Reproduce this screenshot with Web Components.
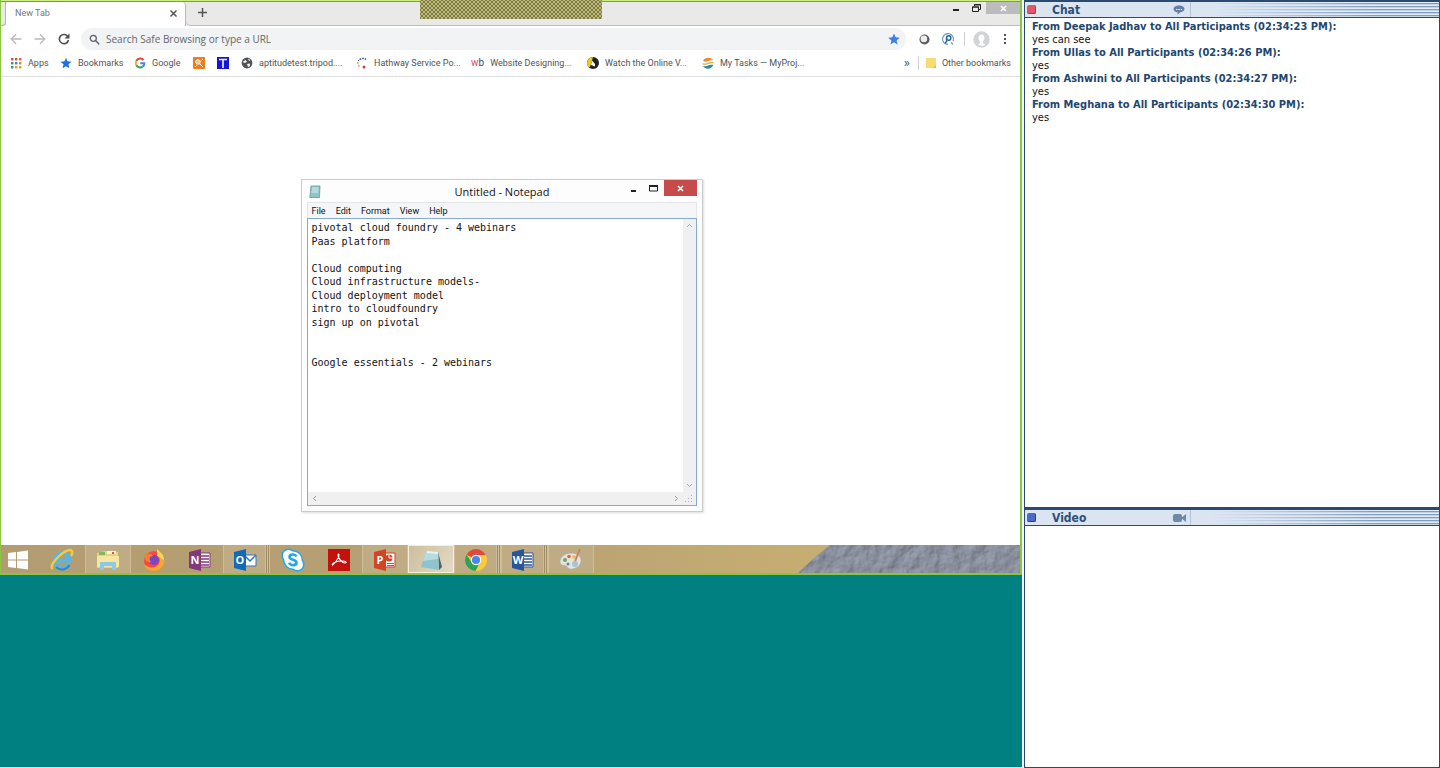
<!DOCTYPE html>
<html lang="en">
<head>
<meta charset="utf-8">
<title>Webinar</title>
<style>
html,body{margin:0;height:100%}
body{font-family:"Open Sans","Noto Sans",sans-serif}
</style>
</head>
<body>
<webinar-room></webinar-room>
<script>
const define = (name, html, setup) => customElements.define(name, class extends HTMLElement {
  connectedCallback() {
    if (this.shadowRoot) return;
    const root = this.attachShadow({ mode: 'open' });
    const t = document.createElement('template');
    t.innerHTML = html;
    root.append(t.content.cloneNode(true));
    if (setup) setup(this, root);
  }
});

define('webinar-room', `
<style>
:host{display:grid;grid-template-columns:minmax(0,1fr) 416px;column-gap:2px;min-height:100vh;background:#f4f7fb}
.stage{display:flex;flex-direction:column;background:#008080;border-bottom:1px solid #fff}
.side{display:flex;flex-direction:column}
.grow{flex:1}
.video{flex:0 0 261px}
</style>
<main class="stage"><shared-screen></shared-screen></main>
<aside class="side">
<side-panel class="grow" heading="Chat" tone="red"><svg slot="icon" width="12" height="10" viewBox="0 0 12 10"><path d="M6 .5C3 .5.5 1.900.5 4S3 7.300 4.500 7.300L4.500 9.500 7.500 7.200C10 6.900 11.500 5.600 11.500 4 11.500 1.900 9 .5 6 .5Z" fill="#6580a5"/><path d="M3 4h1.500v1H3zM5.300 4h1.500v1H5.300zM7.600 4h1.500v1H7.600z" fill="#dfe8f4"/></svg>
<chat-log></chat-log></side-panel>
<side-panel class="video" heading="Video" tone="blue"><svg slot="icon" width="14" height="10" viewBox="0 0 14 10"><rect y="1" width="9" height="8" rx="2" fill="#6f8aa8"/><path d="M8 5l5-4v8z" fill="#6f8aa8"/></svg></side-panel>
</aside>`);

define('side-panel', `
<style>
:host{display:flex;flex-direction:column;box-sizing:border-box;background:#fff;border:1px solid #2b4a70;border-top-width:2px;border-bottom-width:0}
:host(.video){border-top-width:3px;border-bottom-width:1px}
header{display:flex;align-items:center;height:15px;border-bottom:1px solid #2b4a70;background:#dbe5f2}
.dot{box-sizing:border-box;width:9px;height:9px;margin-left:2px;border-radius:2px;background:#e3566b;border:solid #a23c4e;border-width:0 1px 1px 0}
:host([tone=blue]) .dot{background:#4d68cc;border-color:#2c3f88}
h2{margin:0 0 0 16px;width:121px;font:bold 12px/16px "DejaVu Sans Condensed","DejaVu Sans",sans-serif;color:#2f4f74}
.icon{display:flex;width:17px}
.lines{flex:1;align-self:stretch;border-left:1px solid #b3c5da;background:linear-gradient(90deg,#dbe5f2 8%,#dbe5f200 75%),repeating-linear-gradient(#e4ecf5 0 1px,#7f9dbf 1px 2px,#c3d2e4 2px 3px)}
</style>
<header><span class="dot"></span><h2></h2><span class="icon"><slot name="icon"></slot></span><span class="lines"></span></header>
<slot></slot>`, (el, r) => { r.querySelector('h2').textContent = el.getAttribute('heading'); });

define('chat-log', `
<style>
:host{display:block;padding:2px 7px}
p,h3{margin:0;font:11px/13px "DejaVu Sans Condensed","DejaVu Sans",sans-serif;color:#111}
h3{font-weight:bold;color:#23466e}
</style>
<h3>From Deepak Jadhav to All Participants (02:34:23 PM):</h3><p>yes can see</p>
<h3>From Ullas to All Participants (02:34:26 PM):</h3><p>yes</p>
<h3>From Ashwini to All Participants (02:34:27 PM):</h3><p>yes</p>
<h3>From Meghana to All Participants (02:34:30 PM):</h3><p>yes</p>`);

define('shared-screen', `
<style>
:host{display:flex;flex-direction:column;position:relative;box-sizing:border-box;aspect-ratio:1022/575;background:#fff;border:2px solid #8cc540;border-left-width:1px;border-top:0;overflow:hidden}
.hatch{position:absolute;left:41.1%;top:0;z-index:2}
.top{height:2px;background:linear-gradient(#c9f07e 50%,#6fa83c 50%)}
.desk{flex:1;display:flex;justify-content:center;align-items:flex-start;padding-top:102px}
</style>
<span class="top"></span>
<browser-chrome></browser-chrome>
<svg class="hatch" width="182" height="19" aria-hidden="true"><defs><pattern id="net" width="4" height="4" patternUnits="userSpaceOnUse"><rect width="4" height="4" fill="#7b7660"/><path d="M-1-1L5 5M5-1L-1 5" stroke="#d3d15c" stroke-width=".8"/></pattern></defs><rect width="182" height="19" fill="url(#net)"/></svg>
<div class="desk"><note-pad></note-pad></div>
<task-bar></task-bar>`);

define('browser-chrome', `
<style>
:host{display:block;color:#505357;border-bottom:1px solid #dfe1e3;font:9px/14px Roboto,"Open Sans",sans-serif}
button{all:unset;display:flex;align-items:center;justify-content:center}
svg{display:block;flex:none}
.tabs{display:flex;height:24px;background:#e9e9e8;box-sizing:border-box}
.edge{width:5px;border:solid #b5b5b5;border-width:0 1px 1px 0;border-radius:0 0 4px 0;box-sizing:border-box}
.tab{display:flex;align-items:center;width:180px;box-sizing:border-box;padding:0 7px 2px 9px;background:#fff;border-right:1px solid #b5b5b5;border-radius:4px 4px 0 0}
.tab span{flex:1;color:#74777a}
.rest{flex:1;display:flex;border-bottom:1px solid #bdbdbd;align-items:flex-start;border-radius:0 0 0 5px}
.plus{width:32px;height:21px}
.win{margin-left:auto;display:flex}
.win button{height:12px;width:20px}
.win .x{width:34px;background:#bcbcbc}
.bar{display:flex;align-items:center;height:26px;padding:0 3px}
.bar>button{width:24px;height:24px}
.omni{flex:1;display:flex;align-items:center;height:22px;margin:0 6px 0 5px;padding:0 6px 0 8px;border-radius:11px;background:#f1f3f4;gap:6px}
.omni input{all:unset;flex:1;font:10px/22px "Open Sans","Noto Sans",sans-serif;color:#63676b}
.omni input::placeholder{color:#63676b;opacity:1}
.sep{width:1px;height:14px;background:#cfd1d3;margin:0 4px}
.marks{display:flex;align-items:center;height:24px;padding:0 9px 2px;box-sizing:border-box}
.marks a{display:flex;align-items:center;color:inherit;text-decoration:none;white-space:nowrap}
.marks .sep{margin:0 7px 0 8px}
.marks svg,.marks .wb{margin-right:6px}
.marks .more{margin-left:auto;font-size:13px}
.wb{color:#3c4770;font:10px/12px Roboto,"Open Sans",sans-serif}.wb b{color:#d94a68;font-weight:normal}
</style>
<div class="tabs"><span class="edge"></span>
<div class="tab"><span>New Tab</span><button aria-label="Close tab"><svg width="9" height="9" viewBox="0 0 9 9"><path d="M1.500 1.500l6 6m0-6l-6 6" stroke="#555" stroke-width="1.500"/></svg></button></div>
<div class="rest"><button class="plus" aria-label="New tab"><svg width="11" height="11" viewBox="0 0 11 11"><path d="M5.500 1v9M1 5.500h9" stroke="#555" stroke-width="1.500"/></svg></button>
<div class="win"><button aria-label="Minimize"><svg width="8" height="8"><path d="M1 5h6v2H1z" fill="#222"/></svg></button><button aria-label="Restore"><svg width="9" height="9" viewBox="0 0 9 9"><path d="M2.500 2V.5h6v5H7M.5 3h6v4.500h-6z" fill="none" stroke="#222"/><path d="M0 3h7M2 1h7" stroke="#222"/></svg></button><button class="x" aria-label="Close"><svg width="7" height="7"><path d="M1 1l5 5m0-5l-5 5" stroke="#fff" stroke-width="1.500"/></svg></button></div></div></div>
<div class="bar">
<button aria-label="Back"><svg width="12" height="12" viewBox="0 0 12 12"><path d="M11.500 6H1.500M6 1.200L1.200 6 6 10.800" fill="none" stroke="#b9bbbd" stroke-width="1.300"/></svg></button>
<button aria-label="Forward"><svg width="12" height="12" viewBox="0 0 12 12"><path d="M.5 6h10M6 1.200L10.800 6 6 10.800" fill="none" stroke="#b9bbbd" stroke-width="1.300"/></svg></button>
<button aria-label="Reload"><svg width="12" height="12" viewBox="0 0 12 12"><path d="M10 3.800A4.600 4.600 0 1 0 10.500 7" fill="none" stroke="#4d5054" stroke-width="1.600"/><path d="M11.500.5v5h-5z" fill="#4d5054"/></svg></button>
<label class="omni"><svg width="11" height="11" viewBox="0 0 11 11"><circle cx="4.300" cy="4.300" r="3" fill="none" stroke="#5f6368" stroke-width="1.300"/><path d="M6.500 6.500l3.700 3.700" stroke="#5f6368" stroke-width="1.500"/></svg><input aria-label="Address" placeholder="Search Safe Browsing or type a URL"><svg width="12" height="12" viewBox="0 0 12 12"><path d="M6 .5l1.600 3.800 4.200.4-3.200 2.700 1 4.100L6 9.300l-3.600 2.200 1-4.100L.2 4.700l4.200-.4z" fill="#3f7de8"/></svg></label>
<button aria-label="Extension"><svg width="11" height="11" viewBox="0 0 11 11"><circle cx="5.500" cy="5.500" r="5" fill="#5c5c5c"/><circle cx="4.900" cy="4.900" r="3.300" fill="#eee"/></svg></button>
<button aria-label="Safe search"><svg width="12" height="12" viewBox="0 0 12 12"><path d="M11 8A5.400 5.400 0 1 0 6 11.400M9 9.500l2 2" fill="none" stroke="#5f97c4" stroke-width="1.100"/><circle cx="6.700" cy="5" r="2.200" fill="none" stroke="#27639a" stroke-width="1.400"/><path d="M4.500 5v3.500L3 10.500" fill="none" stroke="#27639a" stroke-width="1.300"/></svg></button>
<span class="sep"></span>
<button aria-label="Profile"><svg width="17" height="17" viewBox="0 0 17 17"><circle cx="8.500" cy="8.500" r="8.200" fill="#d2d3d4"/><path d="M8.500 3.500c-2 0-3 1.500-3 3.500 0 1.600.6 2.600 1.500 3.300V12l-2.200 1.200c2 2 5.400 2 7.400 0L10 12v-1.700c.9-.7 1.500-1.700 1.500-3.300 0-2-1-3.500-3-3.500z" fill="#fff"/></svg></button>
<button aria-label="Menu"><svg width="4" height="12"><path d="M1 1h2v2H1zM1 5h2v2H1zM1 9h2v2H1z" fill="#4d5054"/></svg></button>
</div>
<nav class="marks"></nav>`, (el, r) => {
  const nav = r.querySelector('nav');
  const s = (w, inner) => `<svg width="${w}" height="12" viewBox="0 0 ${w} 12">${inner}</svg>`;
  const dots = [0,1,2].flatMap(y => [0,1,2].map(x => `<rect x="${x*4+1}" y="${y*4+1}" width="2.400" height="2.400" fill="${[['#d94b3d','#d94b3d','#d9603d'],['#3a9b50','#3f7de8','#e08a30'],['#3a9b50','#e0a030','#e0a030']][y][x]}"/>`)).join('');
  const items = [
    [50, s(12, dots), 'Apps'],
    [74, s(12, '<path d="M6 .8l1.500 3.500 4 .4-3 2.600.9 4L6 9.200l-3.400 2.100.9-4-3-2.600 4-.4z" fill="#1f6fe0"/>'), 'Bookmarks'],
    [59, s(12, '<g fill="none" stroke-width="2"><path d="M9.500 3A4.300 4.300 0 0 0 2.300 4" stroke="#e04436"/><path d="M2.300 4a4.300 4.300 0 0 0 0 4" stroke="#f2b90c"/><path d="M2.300 8a4.300 4.300 0 0 0 6.400 1.600" stroke="#35a553"/><path d="M8.700 9.600A4 4 0 0 0 10.300 6.200H6.300" stroke="#4285f4"/></g>'), 'Google'],
    [24, s(12, '<rect width="12" height="12" rx="1" fill="#ed7c1d"/><circle cx="5" cy="5" r="2.300" fill="#f7bb80" stroke="#fff"/><path d="M6.500 6.500l3.500 3.500M2 10l2-2M8.500 3l1.500-1" stroke="#fff"/>'), ''],
    [24, s(12, '<rect width="12" height="12" fill="#1414dc"/><path d="M2 2.500h8M6 2.500v8.500" stroke="#fff" stroke-width="1.500"/>'), ''],
    [115, s(12, '<circle cx="6" cy="6" r="5.400" fill="#505357"/><path d="M1.500 5l3-2 1.500 1.500L4 6zM6 7l3-.5L9 9 7 10zM7 1.500l2.500 1.500L8 4z" fill="#f5f5f5"/>'), 'aptitudetest.tripod....'],
    [115, s(12, '<path d="M10 2.500A5 5 0 0 0 2.500 4" fill="none" stroke="#35589b" stroke-width="1.500" stroke-dasharray="1.500 1"/><path d="M2 5a4 4 0 0 0 2.500 5" fill="none" stroke="#eda43c" stroke-width="1.500" stroke-dasharray="2 1"/><circle cx="8" cy="10" r="1.500" fill="#cb4533"/>'), 'Hathway Service Po...'],
    [116, '<span class="wb"><b>w</b>b</span>', 'Website Designing...'],
    [115, s(12, '<circle cx="6" cy="6" r="6" fill="#222"/><path d="M6 0A6 6 0 0 0 0 6c0 2 1 3.500 2.500 4.700L4 7z" fill="#ebc918"/><path d="M5 3.500l3 3.500v2.500L4 8z" fill="#fff"/>'), 'Watch the Online V...'],
    [0, s(12, '<path d="M1 4C3 0 9-.5 11.500 3.500 8 1.500 6 6.500 1 4z" fill="#ef8732"/><path d="M.5 6c4 2 7-2.500 11-1v1.500C8 5.500 5 9 .8 7.500z" fill="#e9b23a"/><path d="M1 9c4 1.500 6-2.500 10.500-1C9 12.500 3.500 12.800 1 9z" fill="#188fa8"/>'), 'My Tasks — MyProj...']
  ];
  nav.innerHTML = items.map(([w, i, t]) => `<a href="#" aria-label="${t || 'Bookmark'}"${w ? ` style="width:${w}px"` : ''}>${i}${t}</a>`).join('') +
   `<a href="#" class="more">»</a><span class="sep"></span><a href="#"><svg width="10" height="12" viewBox="0 0 10 12"><path d="M0 1h10v10H8L0 11z" fill="#f6dc72"/><path d="M7 11l3-3v3z" fill="#ddb940"/></svg>Other bookmarks</a>`;
});

define('note-pad', `
<style>
:host{display:flex;flex-direction:column;box-sizing:border-box;width:402px;height:333px;margin-right:18px;border:1px solid #c9cbce;background:#fdfdfd;padding:0 5px 5px;box-shadow:1px 1px 2px #ddd;font:9px/14px Roboto,"Open Sans",sans-serif;color:#111}
button{all:unset;display:flex;align-items:center;justify-content:center}
svg{display:block}
.title{display:flex;height:22px}
.title>svg{margin:5px 0 0 2px}
h1{flex:1;margin:0;padding-left:60px;text-align:center;font:11px/23px "Open Sans","Noto Sans",sans-serif}
.title button{width:20px;height:16px}
.title .x{width:33px;background:#c84b4c}
.menu{display:flex;gap:10px;height:15px;align-items:center;padding:0 4px;background:#f4f6f7;border:1px solid #e3e5e7;border-width:1px 1px 0}
.doc{flex:1;display:grid;grid-template:1fr 13px/1fr 13px;border:1px solid #85aad8;background:#f0f0f0}
textarea{all:unset;display:block;box-sizing:border-box;background:#fff;padding:2px 4px;font:10px/1.35 "DejaVu Sans Mono",monospace;white-space:pre;color:#111}
.v{display:flex;flex-direction:column;justify-content:space-between;align-items:center;padding:4px 0}
.h{display:flex;justify-content:space-between;align-items:center;padding:0 4px}
.grip{place-self:center}
</style>
<div class="title"><svg width="12" height="13" viewBox="0 0 12 13"><path d="M2 1h9l-.5 11.500H.8z" fill="#8fc6c8" stroke="#66898e" stroke-width=".7"/><path d="M3 3h6.500M3 5h6.500M2.500 7H9" stroke="#d8f0ee"/></svg><h1>Untitled - Notepad</h1>
<button aria-label="Minimize"><svg width="7" height="7"><path d="M1 5h5v2H1z" fill="#222"/></svg></button><button aria-label="Maximize"><svg width="9" height="7"><path d="M.5 1h8v5h-8z" fill="none" stroke="#222"/><path d="M0 1h9" stroke="#222" stroke-width="2"/></svg></button><button class="x" aria-label="Close"><svg width="7" height="7"><path d="M1 1l5 5m0-5l-5 5" stroke="#fff" stroke-width="1.500"/></svg></button></div>
<div class="menu"><button>File</button><button>Edit</button><button>Format</button><button>View</button><button>Help</button></div>
<div class="doc"><textarea aria-label="Document" spellcheck="false">pivotal cloud foundry - 4 webinars
Paas platform

Cloud computing
Cloud infrastructure models-
Cloud deployment model
intro to cloudfoundry
sign up on pivotal


Google essentials - 2 webinars</textarea>
<div class="v"><svg width="7" height="5"><path d="M1 4l2.500-2.500L6 4" fill="none" stroke="#aaa"/></svg><svg width="7" height="5"><path d="M1 1l2.500 2.500L6 1" fill="none" stroke="#aaa"/></svg></div>
<div class="h"><svg width="5" height="7"><path d="M4 1L1.500 3.500 4 6" fill="none" stroke="#999"/></svg><svg width="5" height="7"><path d="M1 1l2.500 2.500L1 6" fill="none" stroke="#999"/></svg></div>
<svg class="grip" width="8" height="8"><path d="M6 0h1v1H6zM3 3h1v1H3zM6 3h1v1H6zM0 6h1v1H0zM3 6h1v1H3zM6 6h1v1H6z" fill="#aab4be"/></svg></div>`);

define('task-bar', `
<style>
:host{display:flex;height:28px;overflow:hidden;background:linear-gradient(90deg,#b49c72,#b8a174 50%,#c6ae72 80%)}
.apps{display:flex;flex:1}
button{all:unset;box-sizing:border-box;display:flex;align-items:center;justify-content:center;width:46px;padding-top:2px}
.start{width:38px;padding-right:4px}
.open{background:#c0ac84;border:1px solid #cdbd9b;border-width:0 1px}
.active{background:linear-gradient(120deg,#cdbf9d,#e3dac6);border:1px solid #f4efe3}
.multi{box-shadow:1px 0 #a08b64,2px 0 #d0c19e,3px 0 #a08b64,4px 0 #d0c19e;width:43px;margin-right:4px}
svg{display:block;flex:none}
.g{font:bold 11px "Open Sans","Noto Sans",sans-serif;fill:#fff}
</style>
<div class="apps"></div>
<svg width="222" height="28" viewBox="0 0 222 28" aria-hidden="true"><defs><filter id="rock" x="0" y="0" width="100%" height="100%" color-interpolation-filters="sRGB"><feTurbulence type="fractalNoise" baseFrequency=".08 .07" numOctaves="4" seed="8"/><feDiffuseLighting surfaceScale="1.500" lighting-color="#9da3b3"><feDistantLight azimuth="225" elevation="62"/></feDiffuseLighting><feComposite in2="SourceGraphic" operator="in"/></filter></defs><path d="M0 28L16 13 32 0H222V28Z" fill="#878b99" filter="url(#rock)"/></svg>`, (el, r) => {
  const s = (inner) => `<svg width="26" height="24" viewBox="0 0 26 24">${inner}</svg>`;
  const office = (c, l, extra) => `<path d="M11 5h12v14H11z" fill="#fff" stroke="${c}"/>${extra}<path d="M2 4l12-3v22L2 20z" fill="${c}"/><text class="g" x="8" y="16" text-anchor="middle">${l}</text>`;
  const lines = c => `<path d="M14 8h8M14 11h8M14 14h8M14 17h8" stroke="${c}" stroke-width="1.500"/>`;
  const apps = [
    ['Start','start', s('<path d="M3 5l8-1v7.500H3zM12 3.900L23 2.500v9H12zM3 12.500h8V20l-8-1zM12 12.500h11v9L12 20z" fill="#fff"/>')],
    ['Internet Explorer','', s('<path d="M20 16.500A7.500 7.500 0 1 1 20.800 12.500H7" fill="none" stroke="#55b7e5" stroke-width="4"/><path d="M20.500 17A8.500 8.500 0 0 1 7 19" fill="none" stroke="#2c8bc6" stroke-width="2"/><path d="M3.500 21C-1 16 18-1 22.500 2.500c1.500 1 .5 4-.5 5.500" fill="none" stroke="#f4cc3b" stroke-width="2.400"/>')],
    ['File Explorer','open', s('<path d="M2 5l8-2 13 1v16H2z" fill="#e9d27d"/><path d="M4 4h6v3H4z" fill="#82b86c"/><path d="M12 3h9v3h-9z" fill="#f8f4df"/><path d="M17 4h2v2h-2z" fill="#cf5a48"/><path d="M2 8h22v11H2z" fill="#f6e6a0"/><path d="M5 22v-8h16v8h-4v-4H9v4z" fill="#8bc9e4"/>')],
    ['Firefox','', s('<circle cx="13" cy="13" r="10" fill="#f34a45"/><path d="M17 2c1 4 8 6 6 13-1 5-6 8-10 8-5 0-9-3-10-7 4 4 10 5 14 1 3-3 2-8-1-10z" fill="#f9a72c"/><path d="M16 1l6 6 1 5-7-4z" fill="#fcd74b"/><circle cx="13" cy="12" r="5" fill="#7a46c8"/><path d="M4 6c4-1 7 0 8 2l-3 1c-1 2 0 4 1 5-5 1-7-4-6-8z" fill="#fb7c32"/>')],
    ['OneNote','', s(office('#80397b','N',lines('#80397b')))],
    ['Outlook','open multi', s('<path d="M12 7h12v11H12z" fill="#fff" stroke="#2c79c4"/><path d="M13 8l5 5 6-6" fill="none" stroke="#2c79c4" stroke-width="1.500"/><path d="M2 4l12-3v22L2 20z" fill="#1269b8"/><text class="g" x="8" y="16" text-anchor="middle">O</text>')],
    ['Skype','', s('<circle cx="8.500" cy="7.500" r="7" fill="#1fa8e5"/><circle cx="17.500" cy="16.500" r="7" fill="#1fa8e5"/><circle cx="13" cy="12" r="10" fill="#1fa8e5"/><circle cx="8.500" cy="7.500" r="5.500" fill="#fff"/><circle cx="17.500" cy="16.500" r="5.500" fill="#fff"/><circle cx="13" cy="12" r="8.600" fill="#fff"/><path d="M16.500 8.500C15 5.500 9.500 6 9.500 9c0 3.500 7 2 7 5.500 0 3.500-6 3.500-7.500.3" fill="none" stroke="#1fa8e5" stroke-width="2.600"/>')],
    ['Adobe Reader','', s('<path d="M2 1h22v22H2z" fill="#c3120e"/><path d="M12.500 6c1.500 0 0 6-6 11-1.500-1.500 4-4 9.500-4 5 0 5 2 3 2-3 0-7-5-7-8z" fill="none" stroke="#fff" stroke-width="1.100"/>')],
    ['PowerPoint','open', s(office('#d04526','P','<circle cx="17" cy="10" r="3.500" fill="#d04526"/><path d="M17 10V6.500M17 10h4" stroke="#fff"/><path d="M15 15.500h7M15 17.500h7" stroke="#d04526"/>'))],
    ['Notepad','active', s('<path d="M20 4l4 15-3 3z" fill="#525f66"/><path d="M8 3l12 1 1 18-18-3z" fill="#8cc3cd"/><path d="M8 3l12 1 .3 7L5 13z" fill="#b7dce0"/><path d="M9 4l11 1" stroke="#e6f4f4" stroke-width="2"/>')],
    ['Chrome','open multi', s('<circle cx="13" cy="12" r="11" fill="#fbcb3c"/><path d="M13 12L3.500 6.500A11 11 0 0 1 22.500 6.500L23 7H13z" fill="#dd4b3e"/><path d="M3.500 6.500A11 11 0 0 0 12.500 23l4.500-8.500L8.500 14z" fill="#2da155"/><circle cx="13" cy="12" r="5.200" fill="#fff"/><circle cx="13" cy="12" r="4.100" fill="#4488ee"/>')],
    ['Word','open multi', s(office('#2a5699','W',lines('#2a5699')))],
    ['Paint','open', s('<path d="M13 5C6 5 1 10 2 15c1 3 4 2 6 3s2 4 7 3c5-1 9-5 8-10-1-4-5-6-10-6z" fill="#e7e3d9" stroke="#9aa7ad" stroke-width=".7"/><circle cx="7" cy="12" r="2" fill="#67a66b"/><circle cx="11" cy="8.500" r="1.800" fill="#d56550"/><circle cx="16" cy="9" r="1.800" fill="#e7ba50"/><circle cx="10" cy="16" r="1.500" fill="#5786c4"/><path d="M22 1l-6 15" stroke="#c08a52" stroke-width="2"/><circle cx="17" cy="16" r="3" fill="#a9c3cf"/>')]
  ];
  r.querySelector('.apps').innerHTML = apps.map(([n, c, i]) => `<button class="${c}" aria-label="${n}">${i}</button>`).join('');
});
</script>
</body>
</html>
